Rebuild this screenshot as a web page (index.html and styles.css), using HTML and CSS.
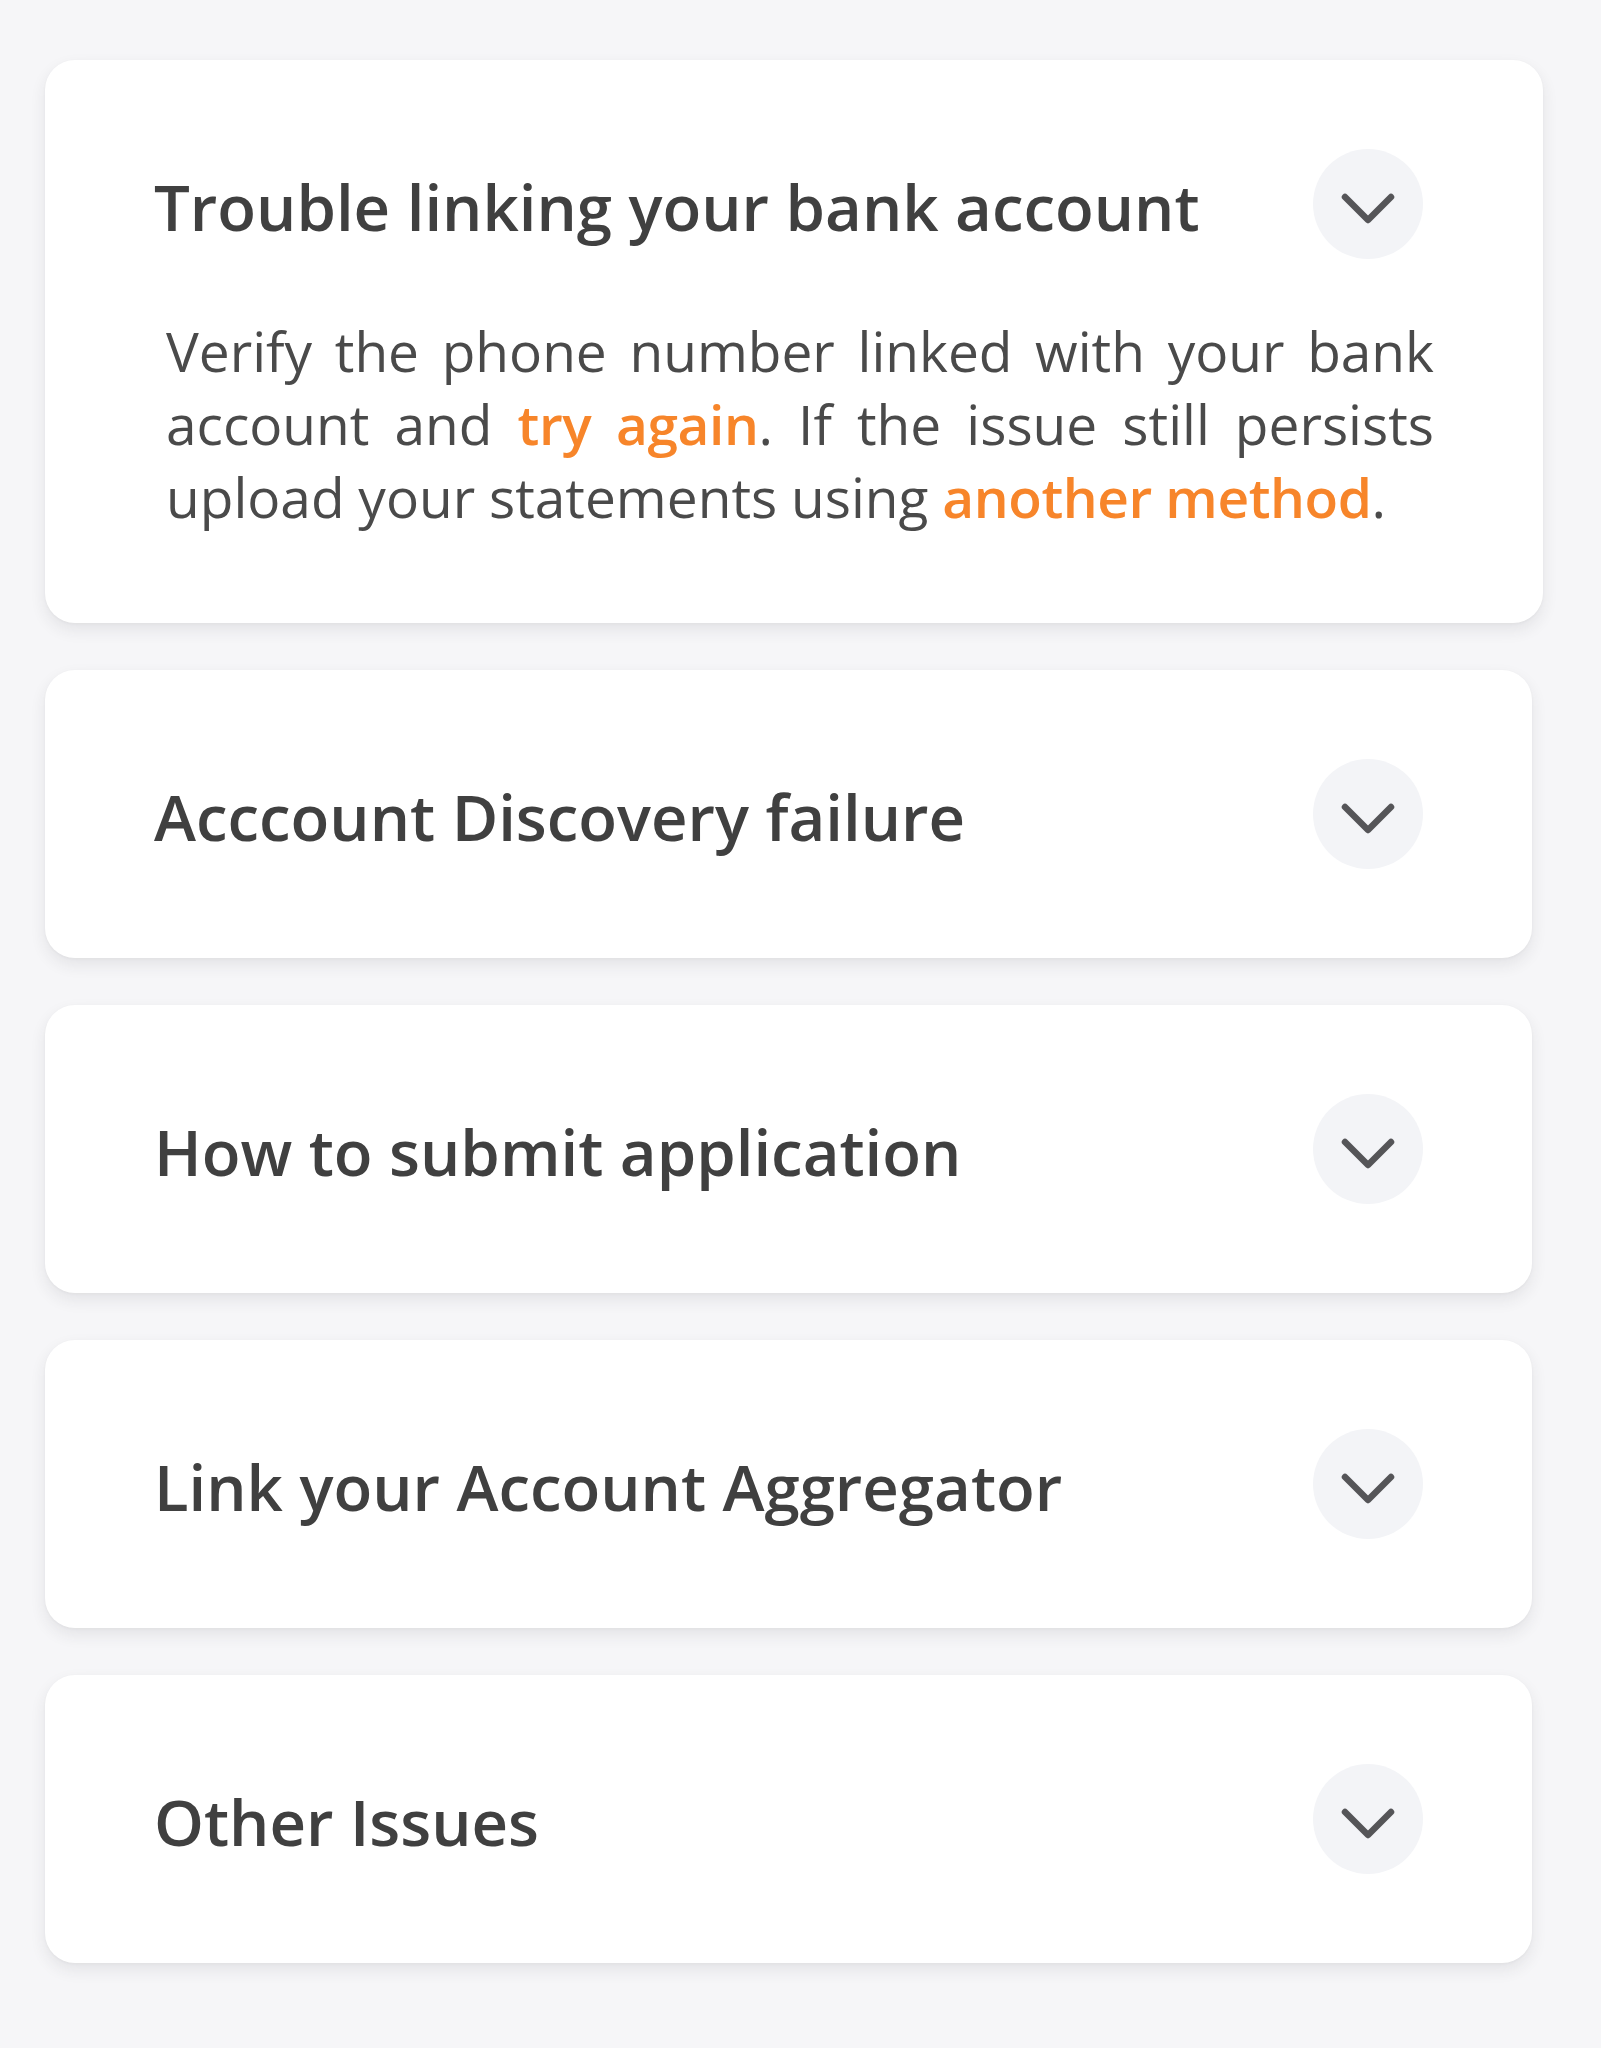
FILE: index.html
```html
<!DOCTYPE html>
<html lang="en">
<head>
<meta charset="utf-8">
<title>Help</title>
<link rel="stylesheet" href="styles.css">
</head>
<body>
<main class="faq-list">
  <section class="faq faq--open">
    <div class="faq-head">
      <h2 class="faq-title">Trouble linking your bank account</h2>
      <span class="faq-toggle"><svg class="chev" viewBox="0 0 54 32" width="54" height="32"><polyline points="4,4 27,27 50,4"/></svg></span>
    </div>
    <p class="faq-body">Verify the phone number linked with your bank account and <a class="link" href="#">try again</a>. If the issue still persists upload your statements using <a class="link" href="#">another method</a>.</p>
  </section>
  <section class="faq">
    <div class="faq-head">
      <h2 class="faq-title">Acccount Discovery failure</h2>
      <span class="faq-toggle"><svg class="chev" viewBox="0 0 54 32" width="54" height="32"><polyline points="4,4 27,27 50,4"/></svg></span>
    </div>
  </section>
  <section class="faq">
    <div class="faq-head">
      <h2 class="faq-title">How to submit application</h2>
      <span class="faq-toggle"><svg class="chev" viewBox="0 0 54 32" width="54" height="32"><polyline points="4,4 27,27 50,4"/></svg></span>
    </div>
  </section>
  <section class="faq">
    <div class="faq-head">
      <h2 class="faq-title">Link your Account Aggregator</h2>
      <span class="faq-toggle"><svg class="chev" viewBox="0 0 54 32" width="54" height="32"><polyline points="4,4 27,27 50,4"/></svg></span>
    </div>
  </section>
  <section class="faq">
    <div class="faq-head">
      <h2 class="faq-title">Other Issues</h2>
      <span class="faq-toggle"><svg class="chev" viewBox="0 0 54 32" width="54" height="32"><polyline points="4,4 27,27 50,4"/></svg></span>
    </div>
  </section>
</main>
</body>
</html>
```
FILE: styles.css
```css
html, body {
  margin: 0;
  padding: 0;
  background: #f6f6f8;
}
body {
  font-family: "Open Sans", "Noto Sans", sans-serif;
  color: #3b3b3b;
}
.faq-list {
  display: flex;
  flex-direction: column;
  align-items: flex-start;
  gap: 47px;
  padding: 60px 0 84px 45px;
}
.faq {
  box-sizing: border-box;
  width: 1487px;
  background: #ffffff;
  border-radius: 30px;
  padding: 89px 109px;
  box-shadow: 0 7px 16px rgba(40, 40, 60, 0.09), 0 1px 3px rgba(40, 40, 60, 0.04);
}
.faq--open {
  width: 1498px;
  padding-bottom: 90px;
}
.faq-head {
  display: flex;
  align-items: center;
  justify-content: space-between;
  height: 110px;
}
.faq--open .faq-head {
  margin-right: 11px;
}
.faq-title {
  margin: 0;
  padding-top: 4px;
  font-size: 63.5px;
  font-weight: 600;
  color: #404040;
  letter-spacing: 0;
}
.faq-toggle {
  flex: none;
  width: 110px;
  height: 110px;
  border-radius: 50%;
  background: #f3f4f7;
  display: flex;
  align-items: center;
  justify-content: center;
}
.chev {
  margin-top: 10px;
  fill: none;
  stroke: #555558;
  stroke-width: 6.5;
  stroke-linecap: round;
  stroke-linejoin: round;
}
.faq-body {
  margin: 55px 0 0 12px;
  font-size: 55px;
  line-height: 73px;
  text-align: justify;
  color: #4a4a4a;
  word-spacing: -0.5px;
}
.link {
  color: #f7852a;
  font-weight: 600;
  letter-spacing: -0.4px;
  text-decoration: none;
}
```
